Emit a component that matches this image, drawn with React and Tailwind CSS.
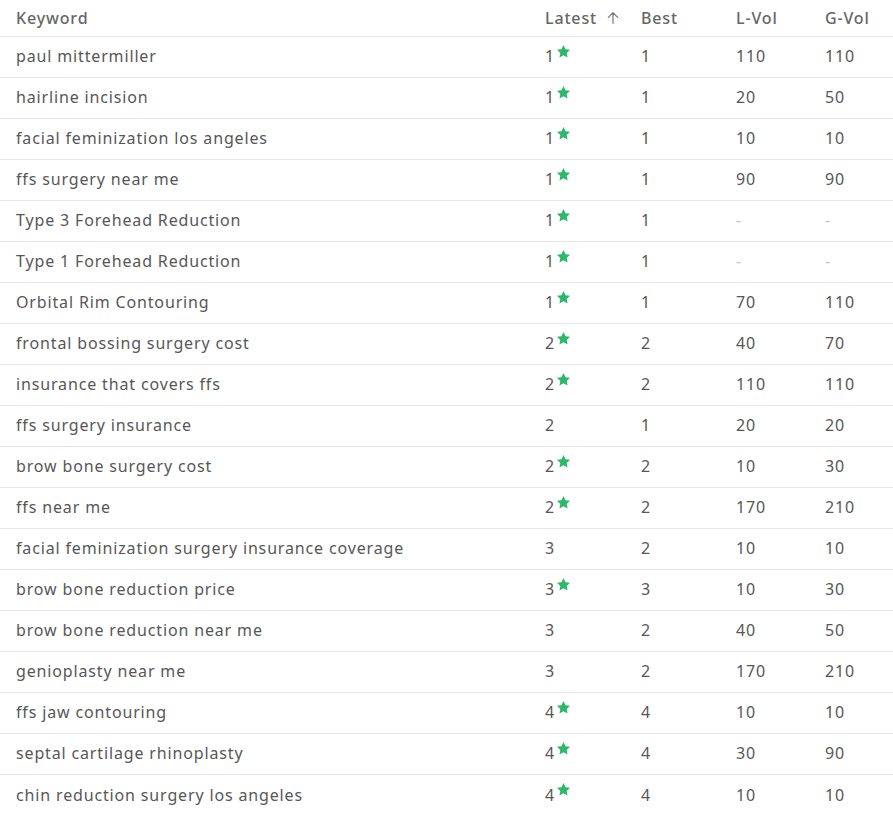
import React from 'react';

const rows = [
  ['paul mittermiller', 1, true, 1, '110', '110'],
  ['hairline incision', 1, true, 1, '20', '50'],
  ['facial feminization los angeles', 1, true, 1, '10', '10'],
  ['ffs surgery near me', 1, true, 1, '90', '90'],
  ['Type 3 Forehead Reduction', 1, true, 1, '-', '-'],
  ['Type 1 Forehead Reduction', 1, true, 1, '-', '-'],
  ['Orbital Rim Contouring', 1, true, 1, '70', '110'],
  ['frontal bossing surgery cost', 2, true, 2, '40', '70'],
  ['insurance that covers ffs', 2, true, 2, '110', '110'],
  ['ffs surgery insurance', 2, false, 1, '20', '20'],
  ['brow bone surgery cost', 2, true, 2, '10', '30'],
  ['ffs near me', 2, true, 2, '170', '210'],
  ['facial feminization surgery insurance coverage', 3, false, 2, '10', '10'],
  ['brow bone reduction price', 3, true, 3, '10', '30'],
  ['brow bone reduction near me', 3, false, 2, '40', '50'],
  ['genioplasty near me', 3, false, 2, '170', '210'],
  ['ffs jaw contouring', 4, true, 4, '10', '10'],
  ['septal cartilage rhinoplasty', 4, true, 4, '30', '90'],
  ['chin reduction surgery los angeles', 4, true, 4, '10', '10'],
];

const Star = () => (
  <svg viewBox="0 0 24 24" className="w-[15px] h-[15px] -mt-[10px] ml-[1px]" fill="#2bb869">
    <path d="M12 1.5l3.2 6.7 7.3.9-5.4 5.1 1.4 7.3L12 17.9l-6.5 3.6 1.4-7.3-5.4-5.1 7.3-.9z" />
  </svg>
);

const Vol = ({ v }) =>
  v === '-' ? <span className="text-[#c4c4c4]">-</span> : <span>{v}</span>;

export default function App() {
  return (
    <div
      className="w-[893px] min-h-[813px] bg-white text-[#575757] text-[16px] tracking-[0.85px]"
      style={{ fontFamily: '"Noto Sans", "Open Sans", sans-serif' }}
    >
      <div className="grid grid-cols-[529px_96px_95px_89px_1fr] items-center h-[37px] pb-[1px] px-4 border-b border-[#e6e6e6] text-[#666] font-medium">
        <div>Keyword</div>
        <div className="flex items-center gap-2">
          Latest
          <svg viewBox="0 0 24 24" className="w-4 h-4" fill="none" stroke="#777" strokeWidth="1.8" strokeLinecap="round" strokeLinejoin="round">
            <path d="M12 20V4M5 11l7-7 7 7" />
          </svg>
        </div>
        <div>Best</div>
        <div>L-Vol</div>
        <div>G-Vol</div>
      </div>
      {rows.map(([kw, latest, star, best, lvol, gvol], i) => (
        <div
          key={i}
          className={`grid grid-cols-[529px_96px_95px_89px_1fr] items-center h-[41px] pb-[2px] px-4 ${i < rows.length - 1 ? 'border-b border-[#e6e6e6]' : ''}`}
        >
          <div>{kw}</div>
          <div className="flex items-center">
            {latest}
            {star && <Star />}
          </div>
          <div>{best}</div>
          <div><Vol v={lvol} /></div>
          <div><Vol v={gvol} /></div>
        </div>
      ))}
    </div>
  );
}
